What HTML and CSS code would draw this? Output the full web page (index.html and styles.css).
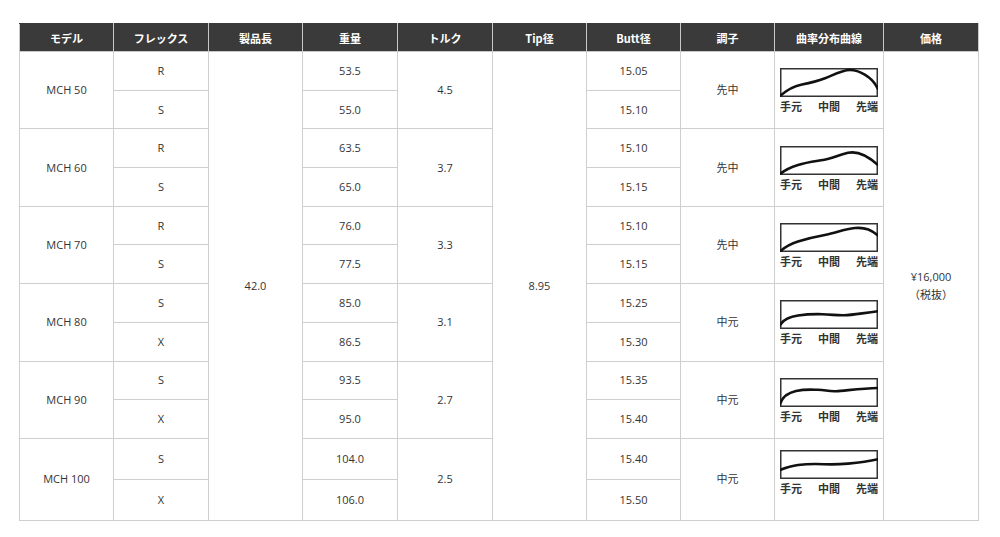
FILE: index.html
```html
<!DOCTYPE html>
<html lang="ja">
<head>
<meta charset="utf-8">
<title>MCH スペック表</title>
<link rel="stylesheet" href="styles.css">
</head>
<body>
<table class="spec">
  <colgroup>
    <col class="c94"><col class="c95"><col class="c94"><col class="c95"><col class="c95">
    <col class="c94"><col class="c94"><col class="c94"><col class="c109"><col class="c95">
  </colgroup>
  <thead>
    <tr>
      <th>モデル</th><th>フレックス</th><th>製品長</th><th>重量</th><th>トルク</th>
      <th>Tip径</th><th>Butt径</th><th>調子</th><th>曲率分布曲線</th><th>価格</th>
    </tr>
  </thead>
  <tbody>
    <tr>
      <td rowspan="2">MCH 50</td><td>R</td><td rowspan="12">42.0</td><td>53.5</td><td rowspan="2">4.5</td>
      <td rowspan="12">8.95</td><td>15.05</td><td rowspan="2">先中</td>
      <td rowspan="2" class="chart">
        <div class="fig">
          <svg class="box" width="98" height="29" viewBox="0 0 98 29"><rect x="0.75" y="0.75" width="96.5" height="27.5"/><path d="M0 28 C 8 21, 14 18, 22 16.5 S 38 13, 45 10.3 S 62 2, 70 2 S 92 8, 98 21"/></svg>
          <div class="labels"><span>手元</span><span>中間</span><span>先端</span></div>
        </div>
      </td>
      <td rowspan="12" class="price">¥16,000<br>（税抜）</td>
    </tr>
    <tr><td>S</td><td>55.0</td><td>15.10</td></tr>

    <tr>
      <td rowspan="2">MCH 60</td><td>R</td><td>63.5</td><td rowspan="2">3.7</td><td>15.10</td><td rowspan="2">先中</td>
      <td rowspan="2" class="chart">
        <div class="fig">
          <svg class="box" width="98" height="29" viewBox="0 0 98 29"><rect x="0.75" y="0.75" width="96.5" height="27.5"/><path d="M0 28 C 5 24, 10 21.5, 18 19 S 34 15.5, 43 14 S 58 9, 68 6.8 S 88 10, 98 19"/></svg>
          <div class="labels"><span>手元</span><span>中間</span><span>先端</span></div>
        </div>
      </td>
    </tr>
    <tr><td>S</td><td>65.0</td><td>15.15</td></tr>

    <tr>
      <td rowspan="2">MCH 70</td><td>R</td><td>76.0</td><td rowspan="2">3.3</td><td>15.10</td><td rowspan="2">先中</td>
      <td rowspan="2" class="chart">
        <div class="fig">
          <svg class="box" width="98" height="29" viewBox="0 0 98 29"><rect x="0.75" y="0.75" width="96.5" height="27.5"/><path d="M0 28.5 C 5 24, 10 21, 18 18.5 S 36 13.5, 46 11.7 S 64 6, 75 5 S 92 7.5, 98 12.5"/></svg>
          <div class="labels"><span>手元</span><span>中間</span><span>先端</span></div>
        </div>
      </td>
    </tr>
    <tr><td>S</td><td>77.5</td><td>15.15</td></tr>

    <tr>
      <td rowspan="2">MCH 80</td><td>S</td><td>85.0</td><td rowspan="2">3.1</td><td>15.25</td><td rowspan="2">中元</td>
      <td rowspan="2" class="chart">
        <div class="fig">
          <svg class="box" width="98" height="29" viewBox="0 0 98 29"><rect x="0.75" y="0.75" width="96.5" height="27.5"/><path d="M0 25 C 3 20, 8 17, 18 15.5 S 32 14, 42 14.2 S 56 15.5, 64 15.3 S 80 13.5, 98 11.3"/></svg>
          <div class="labels"><span>手元</span><span>中間</span><span>先端</span></div>
        </div>
      </td>
    </tr>
    <tr><td>X</td><td>86.5</td><td>15.30</td></tr>

    <tr>
      <td rowspan="2">MCH 90</td><td>S</td><td>93.5</td><td rowspan="2">2.7</td><td>15.35</td><td rowspan="2">中元</td>
      <td rowspan="2" class="chart">
        <div class="fig">
          <svg class="box" width="98" height="29" viewBox="0 0 98 29"><rect x="0.75" y="0.75" width="96.5" height="27.5"/><path d="M0 26 C 2 20, 7 15, 16 13 S 30 11.5, 38 11.8 S 48 13.5, 56 13.2 S 80 10.5, 98 10"/></svg>
          <div class="labels"><span>手元</span><span>中間</span><span>先端</span></div>
        </div>
      </td>
    </tr>
    <tr><td>X</td><td>95.0</td><td>15.40</td></tr>

    <tr class="tall">
      <td rowspan="2">MCH 100</td><td>S</td><td>104.0</td><td rowspan="2">2.5</td><td>15.40</td><td rowspan="2">中元</td>
      <td rowspan="2" class="chart">
        <div class="fig fig-last">
          <svg class="box" width="98" height="29" viewBox="0 0 98 29"><rect x="0.75" y="0.75" width="96.5" height="27.5"/><path d="M0 20 C 5 18, 10 16, 18 15 S 34 13.8, 44 14.2 S 58 14.5, 68 13.6 S 88 11.5, 98 9.2"/></svg>
          <div class="labels"><span>手元</span><span>中間</span><span>先端</span></div>
        </div>
      </td>
    </tr>
    <tr class="tall"><td>X</td><td>106.0</td><td>15.50</td></tr>
  </tbody>
</table>
</body>
</html>
```
FILE: styles.css
```css
html, body {
  margin: 0;
  padding: 0;
  background: #fff;
}

body {
  padding: 23px 0 0 19px;
  font-family: "Open Sans", "Noto Sans CJK JP", sans-serif;
  font-size: 11px;
  color: #333;
}

.spec {
  border-collapse: collapse;
  table-layout: fixed;
  width: 960px;
}

.c94 { width: 94px; }
.c95 { width: 95px; }
.c109 { width: 109px; }

.spec th {
  background: #3a3a3a;
  color: #fff;
  font-family: "Noto Sans CJK JP", sans-serif;
  font-weight: bold;
  font-size: 11px;
  height: 27px;
  padding: 0;
  border: 1px solid #c8c8c8;
  border-top-color: #3a3a3a;
  text-align: center;
  vertical-align: middle;
}

.spec td {
  border: 1px solid #cfcfcf;
  padding: 0;
  text-align: center;
  vertical-align: middle;
  line-height: 14px;
  color: #333;
}

.spec tbody tr {
  height: 38.7px;
}

.spec tbody tr.tall {
  height: 41px;
}

.chart .fig {
  display: flex;
  flex-direction: column;
  width: 98px;
  margin: 0 auto;
}

.chart .fig-last {
  margin-bottom: 14px;
}

.box {
  display: block;
}

.box rect {
  fill: none;
  stroke: #333;
  stroke-width: 1.5;
}

.box path {
  fill: none;
  stroke: #111;
  stroke-width: 2.6;
  stroke-linecap: round;
}

.labels {
  display: flex;
  justify-content: space-between;
  margin-top: 3px;
  font-family: "Noto Sans CJK JP", sans-serif;
  font-weight: bold;
  font-size: 11px;
  line-height: 12px;
  color: #333;
}

.spec td.price {
  line-height: 18px;
}
```
